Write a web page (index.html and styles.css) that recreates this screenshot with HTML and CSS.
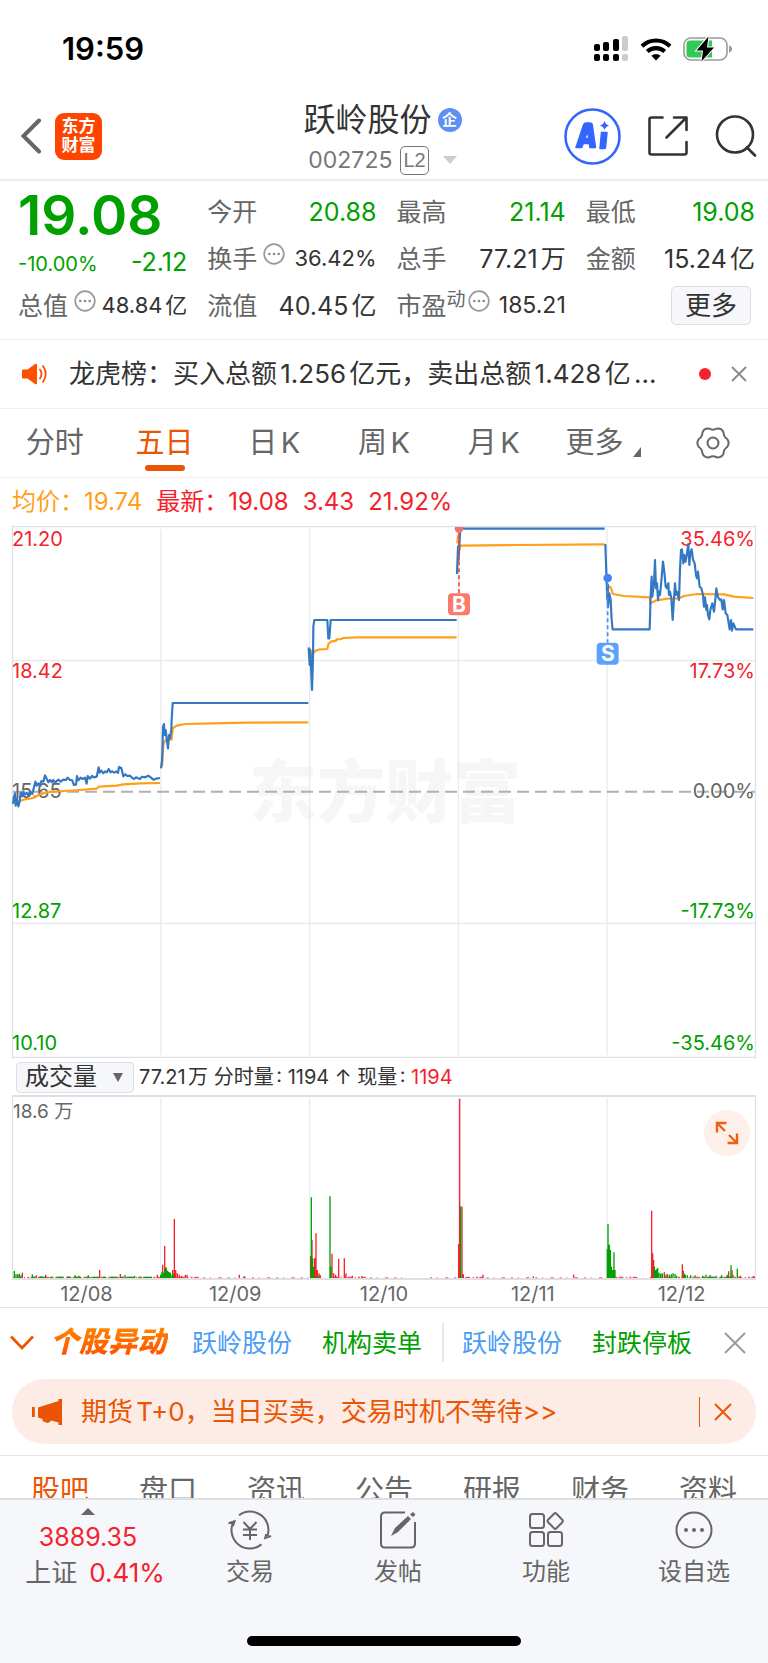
FILE: index.html
```html
<!DOCTYPE html>
<html lang="zh-CN">
<head>
<meta charset="utf-8">
<meta name="viewport" content="width=device-width, initial-scale=1">
<title>跃岭股份 002725</title>
<link rel="stylesheet" href="styles.css">
</head>
<body>
<div class="statusbar">
  <span class="clock">19:59</span>
  <span class="status-icons">
    <svg width="35" height="26" viewBox="0 0 35 26" aria-hidden="true">
      <g fill="#000"><rect x="0" y="8" width="6" height="7" rx="2"/><rect x="9" y="6" width="6" height="9" rx="2"/><rect x="19" y="3" width="6" height="12" rx="2"/><rect x="0" y="18" width="6" height="7" rx="2"/><rect x="9" y="18" width="6" height="7" rx="2"/><rect x="19" y="18" width="6" height="7" rx="2"/></g>
      <g fill="#ccc"><rect x="28" y="0" width="6" height="15" rx="2"/><rect x="28" y="18" width="6" height="7" rx="2"/></g>
    </svg>
    <svg width="32" height="24" viewBox="0 0 32 24" aria-hidden="true">
      <path d="M2 9.2a20 20 0 0 1 28 0M7.3 14.6a12.4 12.4 0 0 1 17.4 0" fill="none" stroke="#000" stroke-width="4.2"/>
      <path d="M16 23.5l-4.6-4.7a6.6 6.6 0 0 1 9.2 0z"/>
    </svg>
    <svg width="50" height="26" viewBox="0 0 50 26" aria-hidden="true">
      <rect x="1" y="2" width="43" height="22" rx="7" fill="none" stroke="#9a9a9a" stroke-width="1.6"/>
      <path d="M46 9.5q3 .8 3 3.500t-3 3.500z" fill="#9a9a9a"/>
      <path d="M7 4.500h22v17H7q-3.500 0-3.500-3.500V8q0-3.500 3.500-3.500z" fill="#34c759"/>
      <path d="M25.500 .5L13.500 14.500h6.500L18.500 25.500 31 11.500h-7z" fill="#000" stroke="#fff" stroke-width="2" paint-order="stroke"/>
    </svg>
  </span>
</div>

<header class="topbar">
  <div class="topbar-left">
    <button class="icon-btn" aria-label="返回"><svg width="22" height="36" viewBox="0 0 22 36"><path d="M19 2.500L3.500 18 19 33.500" fill="none" stroke="#666" stroke-width="4" stroke-linecap="round"/></svg></button>
    <a class="logo" href="#"><span>东方</span><span>财富</span></a>
  </div>
  <div class="topbar-title">
    <h1>跃岭股份<span class="badge">企</span></h1>
    <p class="code">002725<span class="level">L2</span><svg width="14" height="8" viewBox="0 0 14 8" aria-hidden="true"><path d="M0 0h14L7 8z" fill="#ccc"/></svg></p>
  </div>
  <div class="topbar-right">
    <button class="icon-btn" aria-label="Ai"><svg width="57" height="57" viewBox="0 0 57 57"><circle cx="28.500" cy="28.500" r="27" fill="none" stroke="#3366ff" stroke-width="2.600"/><path fill-rule="evenodd" fill="#3366ff" stroke="#3366ff" stroke-width="1.500" stroke-linejoin="round" d="M12 39.500L19.500 17q.8-2 3-2h3.500q2 0 2.300 2L31.500 39.500h-5.500l-.7-4h-6l-1.600 4zM20.800 30.500h4l-1-7zM37.500 24.500h5.500L41.500 39.500q-.2 1-1.200 1h-4.300z"/><path fill="#3366ff" d="M40.500 13q1 3.500 4.500 4.500-3.500 1-4.500 4.500-1-3.500-4.500-4.500 3.500-1 4.500-4.500z"/></svg></button>
    <button class="icon-btn" aria-label="分享"><svg width="40" height="40" viewBox="0 0 40 40" fill="none" stroke="#333" stroke-width="2.600" stroke-linecap="round" stroke-linejoin="round"><path d="M14.500 1.500H3.500q-2 0-2 2v33q0 2 2 2h33q2 0 2-2V26M26 1.500h12.500V14M38 2L18.500 21.500"/></svg></button>
    <button class="icon-btn" aria-label="搜索"><svg width="42" height="42" viewBox="0 0 42 42" fill="none" stroke="#333" stroke-width="2.600" stroke-linecap="round"><circle cx="20" cy="19.500" r="18"/><path d="M32 32.500l8 8"/></svg></button>
  </div>
</header>

<main>
<section class="quote" aria-label="行情">
  <div class="cell"><strong class="price">19.08</strong></div>
  <div class="cell"><span class="label">今开</span><span class="value down">20.88</span></div>
  <div class="cell"><span class="label">最高</span><span class="value down">21.14</span></div>
  <div class="cell"><span class="label">最低</span><span class="value down">19.08</span></div>

  <div class="cell changes"><span class="percent down">-10.00%</span><span class="change down">-2.12</span></div>
  <div class="cell"><span class="label">换手</span><svg class="info" viewBox="0 0 22 22"><use href="#info"/></svg><span class="value small">36.42%</span></div>
  <div class="cell"><span class="label">总手</span><span class="value">77.21万</span></div>
  <div class="cell"><span class="label">金额</span><span class="value">15.24亿</span></div>

  <div class="cell"><span class="label">总值</span><svg class="info" viewBox="0 0 22 22"><use href="#info"/></svg><span class="value small">48.84亿</span></div>
  <div class="cell"><span class="label">流值</span><span class="value">40.45亿</span></div>
  <div class="cell tight"><span class="label">市盈<sup>动</sup></span><svg class="info" viewBox="0 0 22 22"><use href="#info"/></svg><span class="value">185.21</span></div>
  <div class="cell end"><button class="more-btn">更多</button></div>
</section>
<svg class="defs" aria-hidden="true"><defs><g id="info"><circle cx="11" cy="11" r="9.800" fill="none" stroke="#999" stroke-width="1.700"/><g fill="#888"><circle cx="6.300" cy="11" r="1.300"/><circle cx="11" cy="11" r="1.300"/><circle cx="15.700" cy="11" r="1.300"/></g></g></defs></svg>

<section class="news">
  <svg width="26" height="22" viewBox="0 0 26 22" aria-hidden="true"><path d="M1 6.500h4.500L13 1q2-1 2 1v18q0 2-2 1L5.500 15.500H1q-1 0-1-1v-7q0-1 1-1z" fill="#ff5000"/><path d="M18 6.500q3 4.500 0 9M21 3q5.500 8 0 16" fill="none" stroke="#ff5000" stroke-width="1.800" stroke-linecap="round"/></svg>
  <a class="news-text" href="#">龙虎榜：买入总额1.256亿元，卖出总额1.428亿...</a>
  <i class="dot"></i>
  <button class="icon-btn" aria-label="关闭"><svg width="16" height="16" viewBox="0 0 16 16"><path d="M1 1l14 14M15 1L1 15" stroke="#888" stroke-width="1.800"/></svg></button>
</section>

<nav class="periods">
  <button>分时</button>
  <button class="active">五日</button>
  <button>日K</button>
  <button>周K</button>
  <button>月K</button>
  <button class="with-corner">更多<svg width="8" height="10" viewBox="0 0 8 10" aria-hidden="true"><path d="M8 0v10H0z" fill="#666"/></svg></button>
  <button aria-label="设置"><svg width="34" height="34" viewBox="-17 -17 34 34" fill="none" stroke="#666" stroke-width="2"><path d="M14.200-4Q17 0 14.200 4 10.700 6.200 10.600 10.300 9 15 3.600 14.300 0 12.300-3.600 14.300-9 15-10.600 10.300-10.700 6.200-14.200 4-17 0-14.200-4-10.700-6.200-10.600-10.300-9-15-3.600-14.300 0-12.300 3.600-14.300 9-15 10.600-10.300 10.700-6.200 14.200-4z"/><circle r="5.500"/></svg></button>
</nav>

<p class="legend"><span class="avg">均价：19.74</span><span>最新：19.08</span><span>3.43</span><span>21.92%</span></p>

<svg class="chart" viewBox="0 526 768 532" role="img" aria-label="五日走势">
  <text class="watermark" x="385" y="817" text-anchor="middle">东方财富</text>
  <g fill="none" stroke="#e8eaf0" stroke-width="1.300">
    <path d="M160.800 529V1055M309.600 529V1055M458.300 529V1055M607 529V1055M13 660.500H755M13 923.500H755"/>
    <path d="M12.500 526.500H755.500V1057.500H12.500z" stroke="#dfe1e6"/>
  </g>
  <path d="M13 791.700H755" stroke="#b0b0b0" stroke-width="2" stroke-dasharray="12 6"/>
  <g class="labels">
    <g fill="#f5222d"><text x="12" y="546">21.20</text><text x="12" y="678">18.42</text><text x="755" y="546" text-anchor="end">35.46%</text><text x="755" y="678" text-anchor="end">17.73%</text></g>
    <g fill="#666"><text x="12" y="798">15.65</text><text x="755" y="798" text-anchor="end">0.00%</text></g>
    <g fill="#00a000"><text x="12" y="918">12.87</text><text x="12" y="1050">10.10</text><text x="755" y="918" text-anchor="end">-17.73%</text><text x="755" y="1050" text-anchor="end">-35.46%</text></g>
  </g>
  <g transform="translate(0 520) scale(.33333)" fill="none" stroke-width="6.500" stroke-linejoin="round">
    <g stroke="#ff9f1a">
      <path d="M62 842L75 838 100 834 115 826 135 818 150 816 190 813 240 810 290 806 296 800 350 797 370 793 420 790 480 789"/>
      <path d="M486 740L490 675 495 662 515 658 518 625 530 617 555 612 640 610 740 608 925 607"/>
      <path d="M928 385L937 415 940 400 945 393 960 388 982 387 985 373 992 365 1008 362 1010 358 1026 357 1028 354 1070 352H1370"/>
      <path d="M1372 70L1374 48 1378 90 1382 77 1452 76 1552 75 1814 73"/>
      <path d="M1820 190L1827 200 1832 202 1839 222 1872 228 1949 232 1951 250 1967 242 2002 236 2037 235 2052 228 2092 222 2172 223 2202 230 2260 234"/>
    </g>
    <g stroke="#3478c4">
      <path d="M39 852L41 835 45 820 47 857 51 835 55 859 59 845 62 818 66 829 70 816 75 824 80 818 85 826 90 815 97 822 102 802 106 785 110 797 115 790 119 798 124 783 130 785 135 766 140 776 145 787 150 780 155 786 160 780 165 789 170 783 176 779 182 785 190 779 198 780 203 773 210 780 216 780 222 795 228 794 231 768 235 781 242 773 248 777 255 773 260 791 263 768 270 776 276 768 282 772 290 770 296 742 299 758 304 752 310 760 315 754 320 757 326 747 331 757 337 754 343 758 350 754 354 759 357 741 364 744 370 769 376 763 382 768 390 767 396 773 402 777 408 772 414 775 420 777 426 770 432 772 440 770 445 767 452 772 460 779 468 776 480 774"/>
      <path d="M483 745L486 722 487 700 489 620 492 612 494 645 497 630 500 655 504 685 507 645 510 655 514 630 515 600 518 549H925"/>
      <path d="M926 382L929 435 931 390 936 510 939 420 940 320 943 300H982L985 355H988L992 300H1370"/>
      <path d="M1371 162L1374 80 1376 120 1380 40V26H1814"/>
      <path d="M1816 72L1819 160 1820 190 1822 240 1824 195 1824 262 1828 220 1832 240 1835 300 1838 328H1949L1952 225 1955 170 1957 230 1962 190 1965 120 1968 205 1971 190 1974 240 1977 215 1980 225 1984 185 1989 125 1993 155 1997 200 2001 205 2005 190 2007 225 2010 215 2014 235 2018 300 2022 235 2025 190 2028 225 2031 215 2037 240 2040 150 2043 90 2046 88 2050 130 2053 105 2057 125 2061 100 2065 72 2068 135 2071 100 2075 88 2079 118 2084 130 2088 165 2091 175 2094 155 2099 200 2104 205 2109 225 2112 260 2115 232 2119 270 2121 255 2124 285 2128 298 2131 270 2137 250 2142 275 2146 240 2149 205 2153 228 2156 235 2160 240 2164 238 2168 268 2172 240 2177 280 2182 285 2189 328 2193 300 2196 332 2200 310 2208 328H2260"/>
    </g>
    <path d="M1377 40V222" stroke="#f5483f" stroke-width="5" stroke-dasharray="12 9"/>
    <path d="M1823 190V368" stroke="#4a90f0" stroke-width="5" stroke-dasharray="12 9"/>
    <path d="M1365 21H1389A13 13 0 1 1 1365 21z" fill="#f2706a"/>
    <circle cx="1823" cy="174" r="13" fill="#3f87ee"/>
    <rect x="1344" y="220" width="66" height="66" rx="12" fill="#fb7a6b"/>
    <rect x="1790" y="368" width="66" height="66" rx="12" fill="#5ba2ff"/>
  </g>
  <g class="marker" text-anchor="middle"><text x="459" y="612">B</text><text x="608" y="661">S</text></g>
</svg>

<div class="indicator">
  <label class="select-wrap"><select aria-label="指标"><option>成交量</option></select><svg width="10" height="9" viewBox="0 0 10 9" aria-hidden="true"><path d="M0 0h10L5 9z" fill="#666"/></svg></label>
  <p>77.21万 分时量: 1194 ↑ 现量: <span class="up">1194</span></p>
</div>

<div class="volume">
  <svg class="chart" viewBox="0 1095 768 185" role="img" aria-label="成交量">
    <path d="M160.800 1098V1279M309.600 1098V1279M458.300 1098V1279M607 1098V1279" stroke="#e8ecf4" stroke-width="1.300"/>
    <path d="M12.500 1096V1279M755.500 1096V1279" stroke="#dfe1e6" stroke-width="1.300"/>
    <path d="M12 1096H756M12 1279H756" stroke="#dfdfe4" stroke-width="2"/>
    <text class="vol-label" x="13" y="1118">18.6 万</text>
    <g transform="translate(0 1040) scale(.33333)" stroke-width="4">
      <g stroke="#f5222d">
        <path d="M40 712H480M530 712H600M990 712H1100M1386 712H1450M1846 712H1914M1950 712H2265" stroke-dasharray="6 4 14 8 3 7" stroke-width="3"/>
        <path d="M610 713H930M1110 713H1225M1290 713H1370M1460 713H1820" stroke-dasharray="6 14 3 22 10 18" stroke-width="2"/>
        <path d="M67 714V698M109 714V706M137 714V704M299 714V690M361 714V702M204 714V708M237 714V707M472 714V704M488 714V674M494 714V618M498 714V682M518 714V690M523 714V537M527 714V690M532 714V700M538 714V704M545 714V708M556 714V705M561 714V704M718 714V704M733 714V708M932 714V648M936 714V600M944 714V655M948 714V580M952 714V690M957 714V700M961 714V706M996 714V641M1001 714V700M1007 714V704M1016 714V656M1033 714V655M1038 714V700M1057 714V707M1086 714V708M1376 714V612M1379 714V176M1386 714V500M1390 714V703M1449 714V704M1600 714V709M1721 714V704M1955 714V512M1958 714V640M1961 714V660M1993 714V697M2002 714V702M2047 714V673M2050 714V692M2186 714V694M2196 714V690M2221 714V707M2261 714V708"/>
      </g>
      <g stroke="#00a000">
        <path d="M97 712H460M930 712H960M2105 712H2210" stroke-dasharray="10 9 22 12" stroke-width="4"/>
        <path d="M43 714V693M48 714V703M53 714V703M58 714V701M63 714V706M97 714V703M123 714V708M226 714V706M265 714V706M375 714V705M404 714V708M482 714V704M486 714V695M490 714V698M495 714V686M499 714V686M503 714V692M507 714V696M511 714V698M516 714V705M520 714V701M934 714V472M938 714V655M941 714V680M990 714V469M993 714V680M1382 714V499M1822 714V628M1824 714V552M1828 714V614M1831 714V630M1834 714V680M1838 714V690M1842 714V637M1845 714V690M1963 714V680M1966 714V690M1970 714V688M1973 714V684M1977 714V698M1982 714V701M1987 714V700M1998 714V704M2008 714V704M2014 714V703M2019 714V700M2025 714V702M2030 714V707M2052 714V700M2056 714V704M2062 714V706M2072 714V706M2085 714V706M2108 714V707M2118 714V704M2130 714V705M2148 714V707M2165 714V706M2182 714V704M2193 714V676M2199 714V704M2212 714V686"/>
      </g>
    </g>
  </svg>
  <button class="expand" aria-label="全屏"><svg width="24" height="24" viewBox="0 0 24 24" fill="none" stroke="#f06010" stroke-width="2.400"><path d="M2 11.500V2h9.500M2.500 2.500l7.500 7.500M22 12.500V22h-9.500M21.500 21.500L14 14"/></svg></button>
</div>
<div class="dates"><span>12/08</span><span>12/09</span><span>12/10</span><span>12/11</span><span>12/12</span></div>

<section class="alerts">
  <button class="icon-btn" aria-label="展开"><svg width="24" height="16" viewBox="0 0 24 16"><path d="M1 1.500l11 11.500L23 1.500" fill="none" stroke="#ea5504" stroke-width="2.600"/></svg></button>
  <h2>个股异动</h2>
  <a class="stock" href="#">跃岭股份</a><a class="event" href="#">机构卖单</a>
  <i class="divider"></i>
  <a class="stock" href="#">跃岭股份</a><a class="event" href="#">封跌停板</a>
  <button class="icon-btn close" aria-label="关闭"><svg width="22" height="22" viewBox="0 0 22 22"><path d="M1 1l20 20M21 1L1 21" stroke="#999" stroke-width="1.800"/></svg></button>
</section>

<section class="promo">
  <svg width="30" height="26" viewBox="0 0 30 26" aria-hidden="true"><path d="M0 8h2.800v10H0zM6 8.500L26.500 2V0H30v26h-3.500v-2.500L19 21.500q-2 3.500-5 2l-3.500-1.500V20L6 18.500z" fill="#ea5504"/></svg>
  <a href="#">期货T+0，当日买卖，交易时机不等待&gt;&gt;</a>
  <i></i>
  <button class="icon-btn" aria-label="关闭"><svg width="18" height="18" viewBox="0 0 18 18"><path d="M1 1l16 16M17 1L1 17" stroke="#ea5504" stroke-width="2"/></svg></button>
</section>

<nav class="sections">
  <a class="active" href="#">股吧</a><a href="#">盘口</a><a href="#">资讯</a><a href="#">公告</a><a href="#">研报</a><a href="#">财务</a><a href="#">资料</a>
</nav>
</main>

<footer class="bottombar">
  <nav>
    <a class="index" href="#"><svg width="14" height="7" viewBox="0 0 14 7" aria-hidden="true"><path d="M0 7h14L7 0z" fill="#666"/></svg><span class="up">3889.35</span><span class="index-row">上证<b class="up">0.41%</b></span></a>
    <a href="#"><svg width="44" height="40" viewBox="0 0 44 40" fill="none" stroke="#666" stroke-width="2"><path d="M11 5.200A18.400 18.400 0 0 1 39.300 26.300M33.500 34.400A18.400 18.400 0 0 1 5.500 11.800M.5 13.200l6-2-1.500 5M43 26l-5.800 2 1-4M15.500 12l6.500 7 6.500-7M15 19.500h14M15 25h14M22 19v11"/></svg>交易</a>
    <a href="#"><svg width="38" height="40" viewBox="0 0 38 40" fill="none" stroke="#666" stroke-width="2"><path d="M26 2.500H6q-4 0-4 4v27q0 4 4 4h26q4 0 4-4V12"/><path d="M12 26l4-8L29 6l3 3-13 13zM31 4.500L34 2l2.500 2.500L34 7z" fill="#666" stroke="none"/></svg>发帖</a>
    <a href="#"><svg width="36" height="40" viewBox="0 0 36 40" fill="none" stroke="#666" stroke-width="2"><rect x="2" y="4" width="14" height="14" rx="2.500"/><rect x="2" y="22" width="14" height="14" rx="2.500"/><rect x="20" y="22" width="14" height="14" rx="2.500"/><path d="M26 3.700q1.200-1.200 2.400 0l5.900 6.100q1.200 1.200 0 2.400l-5.900 6.100q-1.200 1.200-2.400 0l-5.900-6.100q-1.200-1.200 0-2.400z"/></svg>功能</a>
    <a href="#"><svg width="40" height="40" viewBox="0 0 40 40"><circle cx="20" cy="20" r="17.500" fill="none" stroke="#666" stroke-width="2"/><g fill="#666"><circle cx="12" cy="20" r="2"/><circle cx="20" cy="20" r="2"/><circle cx="28" cy="20" r="2"/></g></svg>设自选</a>
  </nav>
  <div class="home"></div>
</footer>
</body>
</html>
```
FILE: styles.css
```css
* { box-sizing: border-box; }
body {
  margin: 0;
  background: #fff;
  color: #333;
  font-family: Inter, "Noto Sans CJK SC", sans-serif;
  font-size: 26px;
  font-weight: 400;
  line-height: 1.2;
  text-autospace: normal;
}
h1, h2, p { margin: 0; font-weight: 400; }
a { color: inherit; text-decoration: none; }
button { font: inherit; color: inherit; background: none; border: 0; padding: 0; cursor: pointer; }
svg { display: block; flex: none; }
.icon-btn { display: flex; flex: none; }
.defs { position: absolute; width: 0; height: 0; }
.up { color: #f5222d; }
.down { color: #00a000; }

.statusbar { display: flex; justify-content: space-between; align-items: center; height: 96px; padding: 2px 35px 0 62px; color: #000; }
.clock { font-size: 31px; font-weight: 600; }
.status-icons { display: flex; align-items: center; gap: 11px; }

.topbar { display: grid; grid-template-columns: 1fr auto 1fr; align-items: center; height: 85px; padding: 0 11px 3px 20px; border-bottom: 2px solid #ececec; }
.topbar-left, .topbar-right { display: flex; align-items: center; }
.topbar-left { gap: 13px; }
.topbar-right { gap: 27px; justify-content: flex-end; }
.logo { display: flex; flex-direction: column; align-items: center; justify-content: center; width: 47px; height: 47px; border-radius: 9px; background: #ff4400; color: #fff; font-size: 17px; font-weight: 700; line-height: 19px; }
.topbar-title { display: flex; flex-direction: column; align-items: center; gap: 8px; padding: 4px 12px 0 0; }
.topbar-title h1 { display: flex; align-items: center; gap: 6px; font-size: 32px; line-height: 36px; }
.badge { display: grid; place-items: center; width: 24px; height: 24px; border-radius: 50%; background: #5f8ff0; color: #fff; font-size: 15px; font-weight: 700; line-height: 24px; }
.code { display: flex; align-items: center; color: #777; font-size: 23px; line-height: 29px; }
.level { margin: 0 14px 0 8px; padding: 0 2px; border: 1px solid #777; border-radius: 5px; font-family: "Liberation Sans", sans-serif; font-size: 20px; line-height: 27px; }

.quote { display: grid; grid-template-columns: repeat(4, 1fr); grid-auto-rows: 47px; column-gap: 20px; padding: 7px 13px 10px 18px; border-bottom: 1px solid #f0f0f0; }
.cell { display: flex; align-items: center; white-space: nowrap; min-width: 0; }
.label { color: #666; font-size: 25px; }
.value { margin-left: auto; font-size: 25px; }
.value.small { font-size: 22px; }
.price { padding-top: 6px; color: #00a000; font-size: 55px; font-weight: 600; line-height: 60px; }
.changes { align-items: baseline; padding-top: 12px; }
.percent { font-size: 20px; }
.change { margin-left: auto; font-size: 25px; }
.info { width: 22px; height: 22px; margin: 0 0 10px 6px; }
.tight .info { margin-left: 2px; }
.tight .value { font-size: 23px; }
.label sup { font-size: 19px; line-height: 0; }
.end { justify-content: flex-end; padding-right: 4px; }
.more-btn { width: 80px; height: 39px; border: 1px solid #dcdee4; border-radius: 5px; background: #f6f7fa; line-height: 36px; }

.news { display: flex; align-items: center; height: 69px; padding: 0 21px 0 22px; border-bottom: 1px solid #f0f0f0; }
.news-text { flex: 1; min-width: 0; margin-left: 21px; white-space: nowrap; overflow: hidden; }
.dot { width: 12px; height: 12px; margin-right: 20px; border-radius: 50%; background: #f5222d; }

.periods { display: grid; grid-template-columns: repeat(7, 1fr); height: 69px; border-bottom: 1px solid #f0f0f0; color: #666; font-size: 29px; }
.periods button { position: relative; display: flex; align-items: center; justify-content: center; gap: 4px; }
.periods .active { color: #ea5504; }
.periods .active::after { content: ""; position: absolute; bottom: 6px; width: 40px; height: 6px; border-radius: 3px; background: #ea5504; }
.with-corner svg { align-self: flex-end; margin: 0 0 20px 6px; }

.legend { display: flex; align-items: center; gap: 14px; height: 48px; padding-left: 12px; font-size: 24px; color: #f5222d; }
.avg { color: #ff9f1a; }

.chart { width: 100%; height: auto; }
.labels { font-size: 20px; }
.watermark { font-size: 68px; font-weight: 900; fill: #f6f6f7; }
.marker { font-size: 21px; font-weight: 700; fill: #fff; }
.indicator { display: flex; align-items: center; gap: 5px; height: 37px; padding: 1px 0 0 16px; font-size: 20px; }
.select-wrap { position: relative; }
.select-wrap select { display: block; width: 118px; height: 31px; padding: 0 8px; border: 1px solid #dcdee4; border-radius: 4px; background: #f6f7fa; color: #333; font: inherit; font-size: 24px; line-height: 28px; appearance: none; }
.select-wrap svg { position: absolute; right: 11px; top: 11px; pointer-events: none; }
.volume { position: relative; }
.vol-label { font-size: 19px; fill: #666; }
.expand { position: absolute; top: 15px; right: 18px; display: grid; place-items: center; width: 46px; height: 46px; border-radius: 50%; background: #fdf0ea; }
.dates { display: grid; grid-template-columns: repeat(5, 1fr); height: 28px; padding: 0 12px; border-bottom: 1px solid #e4e4e4; color: #666; font-size: 20px; line-height: 29px; text-align: center; }

.alerts { display: flex; align-items: center; height: 71px; padding: 0 22px 2px 10px; font-size: 25px; }
.alerts h2 { margin: 0 24px 0 16px; padding-right: 2px; font-size: 29px; font-weight: 900; font-style: italic; background: linear-gradient(#ff8a00, #ff4800); background-clip: text; color: transparent; }
.stock { color: #4a9cf5; }
.event { margin-left: 30px; color: #00a000; }
.divider { width: 2px; height: 39px; margin: 0 18px 0 20px; background: #e8e8e8; }
.close { margin-left: auto; }

.promo { display: flex; align-items: center; height: 65px; margin: 0 12px 11px; padding: 0 24px 0 20px; border-radius: 32px; background: #fcece5; color: #ea5504; }
.promo a { flex: 1; margin-left: 19px; white-space: nowrap; }
.promo i { width: 1px; height: 30px; margin-right: 14px; background: #ea5504; }

.sections { display: flex; height: 43px; padding: 20px 6px 0; border-top: 1px solid #e4e4e4; overflow: hidden; color: #666; font-size: 29px; line-height: 29px; }
.sections a { flex: 1; text-align: center; }
.sections .active { color: #ea5504; }

.bottombar { height: 165px; background: #f6f7fa; border-top: 2px solid #dedfe3; color: #666; }
.bottombar nav { display: grid; grid-template-columns: 176fr 148fr 148fr 148fr 148fr; height: 136px; }
.bottombar a { display: flex; flex-direction: column; align-items: center; padding-top: 10px; gap: 7px; font-size: 24px; line-height: 30px; }
.bottombar .index { padding-top: 8px; font-size: 25px; }
.index-row { display: flex; gap: 12px; padding-left: 14px; font-size: 26px; line-height: 28px; }
.index-row b { font-weight: 400; }
.home { width: 274px; height: 10px; margin: 0 auto; border-radius: 5px; background: #000; }
```
